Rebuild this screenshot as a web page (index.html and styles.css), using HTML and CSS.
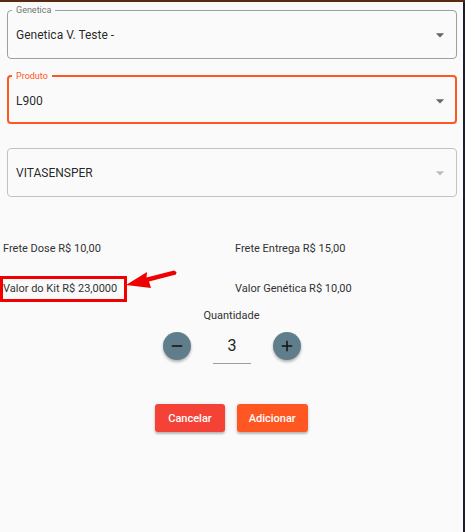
FILE: index.html
```html
<!DOCTYPE html>
<html lang="pt-BR">
<head>
<meta charset="utf-8">
<title>Adicionar produto</title>
<link rel="stylesheet" href="styles.css">
</head>
<body>
<div class="topbar"></div>
<div class="page">
  <form class="form">
    <fieldset class="field">
      <legend class="field-label">Genetica</legend>
      <div class="field-row">
        <span class="field-value">Genetica V. Teste -</span>
        <svg class="drop" viewBox="0 0 24 24" width="20" height="20"><path d="M7 10l5 5 5-5z"/></svg>
      </div>
    </fieldset>

    <fieldset class="field focused">
      <legend class="field-label">Produto</legend>
      <div class="field-row">
        <span class="field-value">L900</span>
        <svg class="drop" viewBox="0 0 24 24" width="20" height="20"><path d="M7 10l5 5 5-5z"/></svg>
      </div>
    </fieldset>

    <div class="field plain disabled">
      <span class="field-value">VITASENSPER</span>
      <svg class="drop" viewBox="0 0 24 24" width="20" height="20"><path d="M7 10l5 5 5-5z"/></svg>
    </div>

    <div class="info">
      <div class="info-item">Frete Dose R$ 10,00</div>
      <div class="info-item">Frete Entrega R$ 15,00</div>
      <div class="info-item"><span class="highlight">Valor do Kit R$ 23,0000</span></div>
      <div class="info-item">Valor Genética R$ 10,00</div>
      <svg class="pointer" viewBox="0 0 56 24" width="56" height="24">
        <polygon points="2,17 23,4 22.5,9.5 50,2.5 52.5,4 52,6.5 25,13.5 27,20"/>
      </svg>
    </div>

    <div class="qty">
      <div class="qty-label">Quantidade</div>
      <div class="stepper">
        <button type="button" class="round">
          <svg viewBox="0 0 24 24" width="18" height="18"><path d="M19 13H5v-2h14v2z"/></svg>
        </button>
        <div class="qty-input">3</div>
        <button type="button" class="round">
          <svg viewBox="0 0 24 24" width="18" height="18"><path d="M19 13h-6v6h-2v-6H5v-2h6V5h2v6h6v2z"/></svg>
        </button>
      </div>
    </div>

    <div class="actions">
      <button type="button" class="btn cancel">Cancelar</button>
      <button type="button" class="btn add">Adicionar</button>
    </div>
  </form>
</div>
</body>
</html>
```

FILE: styles.css
```css
* { box-sizing: border-box; }

html, body {
  margin: 0;
  padding: 0;
  background: #fafafa;
  font-family: Roboto, "Liberation Sans", Arial, sans-serif;
  color: rgba(0, 0, 0, 0.87);
}

.topbar {
  height: 2px;
  background: #5a2a10;
}

.page {
  width: 465px;
  min-height: 530px;
  border-right: 2px solid #1c1b2f;
}

.form {
  padding: 2px 6px 0 7px;
  display: flex;
  flex-direction: column;
}

.field {
  margin: 0;
  min-width: 0;
  border: 1px solid #9e9e9e;
  border-radius: 4px;
  padding: 0 6px 5px 8px;
}

.field + .field { margin-top: 11px; }

.field-label {
  font-size: 9px;
  line-height: 12px;
  color: #757575;
  padding: 0 4px;
  margin-left: -4px;
}

.field-row {
  height: 37px;
  display: flex;
  align-items: center;
}

.field-value {
  flex: 1;
  font-size: 12px;
  line-height: 16px;
  color: rgba(0, 0, 0, 0.87);
}

.drop { fill: #666; flex: none; }

.field.focused {
  border: 2px solid #ff5722;
  padding: 0 5px 3px 7px;
}
.field.focused .field-label { color: #ff5722; }

.field.plain {
  margin-top: 24px;
  height: 49px;
  padding: 0 6px 0 8px;
  display: flex;
  align-items: center;
  border-color: #c2c2c2;
}
.field.disabled .drop { fill: #bdbdbd; }

.info {
  position: relative;
  margin: 42px 0 0 -4px;
  display: grid;
  grid-template-columns: 232px 1fr;
  row-gap: 20px;
  font-size: 11px;
  color: #333;
}

.info-item {
  height: 20px;
  line-height: 20px;
  white-space: nowrap;
}

.highlight {
  display: inline-block;
  padding-right: 7px;
  outline: 3px solid #f00000;
}

.pointer {
  position: absolute;
  left: 121px;
  top: 29px;
  fill: #f00000;
}

.qty {
  margin: 10px 0 0 -7px;
  width: 463px;
  display: flex;
  flex-direction: column;
  align-items: center;
}

.qty-label {
  font-size: 11px;
  line-height: 14px;
  color: #333;
}

.stepper {
  margin-top: 8px;
  display: flex;
  align-items: flex-start;
  gap: 22px;
  padding-left: 1px;
}

.round {
  width: 28px;
  height: 28px;
  margin-top: 1px;
  border: 0;
  border-radius: 50%;
  background: #607d8b;
  box-shadow: 0 2px 3px rgba(0, 0, 0, 0.3);
  padding: 0;
  display: flex;
  align-items: center;
  justify-content: center;
}
.round svg { fill: #111; }

.qty-input {
  width: 38px;
  height: 33px;
  padding-top: 5px;
  border-bottom: 1px solid #9e9e9e;
  text-align: center;
  font-size: 16px;
  line-height: 20px;
  color: #222;
}

.actions {
  margin: 40px 0 0 -7px;
  width: 463px;
  display: flex;
  justify-content: center;
  gap: 12px;
}

.btn {
  height: 28px;
  padding: 0 12px;
  border: 0;
  border-radius: 3px;
  color: #fff;
  font-family: Roboto, "Liberation Sans", Arial, sans-serif;
  font-size: 11px;
  font-weight: 500;
  box-shadow: 0 2px 2px rgba(0, 0, 0, 0.2), 0 1px 4px rgba(0, 0, 0, 0.12);
}
.btn.cancel { background: #f44336; padding: 0 13px; }
.btn.add { background: #ff5722; }
```
